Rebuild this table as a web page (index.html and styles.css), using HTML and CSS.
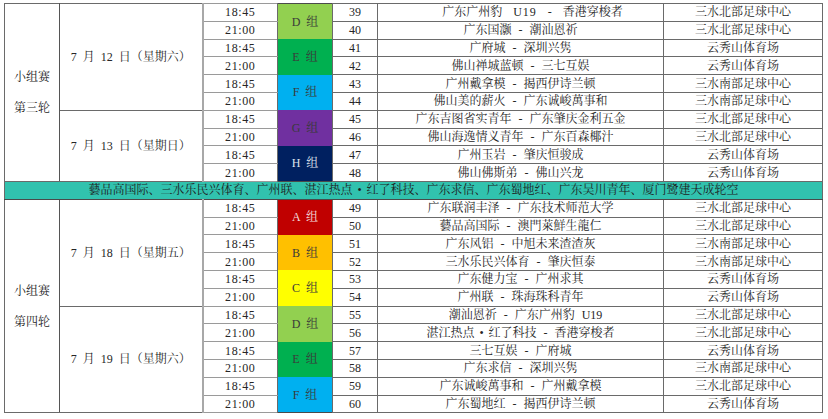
FILE: index.html
```html
<!DOCTYPE html>
<html lang="zh">
<head>
<meta charset="utf-8">
<link rel="stylesheet" href="styles.css">
</head>
<body>
<div class="wrap">
<table class="sched">
  <colgroup>
    <col class="c-round"><col class="c-date"><col class="c-time"><col class="c-grp"><col class="c-no"><col class="c-match"><col class="c-venue">
  </colgroup>
  <tbody>
    <tr>
      <td class="round" rowspan="10"><span>小组赛</span><span>第三轮</span></td>
      <td class="date" rowspan="6">7 月 12 日（星期六）</td>
      <td class="time">18:45</td><td class="grp g-d" rowspan="2">D 组</td><td class="no">39</td><td class="match wide">广东广州豹 <span class="lat">U19</span> - 香港穿梭者</td><td class="venue">三水北部足球中心</td>
    </tr>
    <tr><td class="time">21:00</td><td class="no">40</td><td class="match">广东国灏 - 潮汕恩祈</td><td class="venue">三水北部足球中心</td></tr>
    <tr><td class="time">18:45</td><td class="grp g-e" rowspan="2">E 组</td><td class="no">41</td><td class="match">广府城 - 深圳兴隽</td><td class="venue">云秀山体育场</td></tr>
    <tr><td class="time">21:00</td><td class="no">42</td><td class="match">佛山禅城蓝顿 - 三七互娱</td><td class="venue">云秀山体育场</td></tr>
    <tr><td class="time">18:45</td><td class="grp g-f" rowspan="2">F 组</td><td class="no">43</td><td class="match">广州戴拿模 - 揭西伊诗兰顿</td><td class="venue">三水南部足球中心</td></tr>
    <tr><td class="time">21:00</td><td class="no">44</td><td class="match">佛山美的薪火 - 广东诚峻萬事和</td><td class="venue">三水南部足球中心</td></tr>
    <tr>
      <td class="date" rowspan="4">7 月 13 日（星期日）</td>
      <td class="time">18:45</td><td class="grp g-g" rowspan="2">G 组</td><td class="no">45</td><td class="match">广东吉图省实青年 - 广东肇庆金利五金</td><td class="venue">三水北部足球中心</td>
    </tr>
    <tr><td class="time">21:00</td><td class="no">46</td><td class="match">佛山海逸情义青年 - 广东百森椰汁</td><td class="venue">三水北部足球中心</td></tr>
    <tr><td class="time">18:45</td><td class="grp g-h" rowspan="2">H 组</td><td class="no">47</td><td class="match">广州玉岩 - 肇庆恒骏成</td><td class="venue">云秀山体育场</td></tr>
    <tr><td class="time">21:00</td><td class="no">48</td><td class="match">佛山佛斯弟 - 佛山兴龙</td><td class="venue">云秀山体育场</td></tr>
    <tr><td class="bye" colspan="7">藝品高国际、三水乐民兴体育、广州联、湛江热点<span class="dot">•</span>红了科技、广东求信、广东蜀地红、广东吴川青年、厦门鹭建天成轮空</td></tr>
    <tr>
      <td class="round" rowspan="12"><span>小组赛</span><span>第四轮</span></td>
      <td class="date" rowspan="6">7 月 18 日（星期五）</td>
      <td class="time">18:45</td><td class="grp g-a" rowspan="2">A 组</td><td class="no">49</td><td class="match">广东联润丰泽 - 广东技术师范大学</td><td class="venue">三水北部足球中心</td>
    </tr>
    <tr><td class="time">21:00</td><td class="no">50</td><td class="match">藝品高国际 - 澳門萊鮮生龍仁</td><td class="venue">三水北部足球中心</td></tr>
    <tr><td class="time">18:45</td><td class="grp g-b" rowspan="2">B 组</td><td class="no">51</td><td class="match">广东风铝 - 中旭未来渣渣灰</td><td class="venue">三水南部足球中心</td></tr>
    <tr><td class="time">21:00</td><td class="no">52</td><td class="match">三水乐民兴体育 - 肇庆恒泰</td><td class="venue">三水南部足球中心</td></tr>
    <tr><td class="time">18:45</td><td class="grp g-c" rowspan="2">C 组</td><td class="no">53</td><td class="match">广东健力宝 - 广州求其</td><td class="venue">云秀山体育场</td></tr>
    <tr><td class="time">21:00</td><td class="no">54</td><td class="match">广州联 - 珠海珠科青年</td><td class="venue">云秀山体育场</td></tr>
    <tr>
      <td class="date" rowspan="6">7 月 19 日（星期六）</td>
      <td class="time">18:45</td><td class="grp g-d" rowspan="2">D 组</td><td class="no">55</td><td class="match nudge">潮汕恩祈 - 广东广州豹 U19</td><td class="venue">三水北部足球中心</td>
    </tr>
    <tr><td class="time">21:00</td><td class="no">56</td><td class="match">湛江热点<span class="dot">•</span>红了科技 - 香港穿梭者</td><td class="venue">三水北部足球中心</td></tr>
    <tr><td class="time">18:45</td><td class="grp g-e" rowspan="2">E 组</td><td class="no">57</td><td class="match">三七互娱 - 广府城</td><td class="venue">云秀山体育场</td></tr>
    <tr><td class="time">21:00</td><td class="no">58</td><td class="match">广东求信 - 深圳兴隽</td><td class="venue">三水南部足球中心</td></tr>
    <tr><td class="time">18:45</td><td class="grp g-f" rowspan="2">F 组</td><td class="no">59</td><td class="match">广东诚峻萬事和 - 广州戴拿模</td><td class="venue">三水北部足球中心</td></tr>
    <tr><td class="time">21:00</td><td class="no">60</td><td class="match">广东蜀地红 - 揭西伊诗兰顿</td><td class="venue">云秀山体育场</td></tr>
  </tbody>
</table>
</div>
</body>
</html>
```
FILE: styles.css
```css
html, body {
  margin: 0;
  padding: 0;
  background: #ffffff;
}
.wrap {
  padding: 3px 6px 0 4px;
}
.sched {
  width: 818px;
  table-layout: fixed;
  border-collapse: collapse;
  font-family: "Liberation Serif", "Noto Serif CJK SC", "Noto Sans CJK SC", serif;
  font-size: 12px;
  color: #262626;
  border: 1px solid #4a4a4a;
}
.c-round { width: 55px; }
.c-date { width: 143px; }
.c-time { width: 75px; }
.c-grp { width: 55px; }
.c-no { width: 45px; }
.c-match { width: 286px; }
.c-venue { width: 159px; }
.sched tr {
  height: 17.8px;
}
.sched td {
  padding: 0;
  line-height: 14px;
  text-align: center;
  vertical-align: middle;
  border: 1px solid #6a6a6a;
  white-space: nowrap;
  overflow: hidden;
}
.sched td.round {
  border-right: 1px solid #555;
  padding-top: 2px;
}
.round span {
  display: block;
  line-height: 15px;
}
.round span + span {
  margin-top: 16px;
}
.date {
  word-spacing: 3px;
  border-right: 2px solid #a8a8a8 !important;
}
.sched td.time {
  letter-spacing: 0.6px;
  border-top: 1px solid #9a9a9a;
  border-bottom: 1px solid #9a9a9a;
}
.match {
  word-spacing: 4px;
}
.sched td.wide {
  word-spacing: 8px;
  padding-left: 24px;
}
.lat {
  letter-spacing: 1px;
}
.sched td.nudge {
  padding-left: 10px;
}
.dot {
  padding: 0 5px;
}
.sched td.grp {
  word-spacing: 3px;
  border-top: none;
  border-bottom: none;
  color: #3a3a3a;
}
.g-a { background: #c00000; }
.sched td.g-a { color: #f2dede; }
.g-b { background: #ffc000; }
.g-c { background: #ffff00; }
.g-d { background: #92d050; }
.g-e { background: #00b050; }
.g-f { background: #00b0f0; }
.g-g { background: #7030a0; }
.g-h { background: #002060; }
.sched td.g-h { color: #dfe3ee; }
.sched td.bye {
  background: #31c2ae;
  color: #1e1e1e;
  border-top: 1px solid #4a4a4a;
  border-bottom: 1px solid #4a4a4a;
}
```
